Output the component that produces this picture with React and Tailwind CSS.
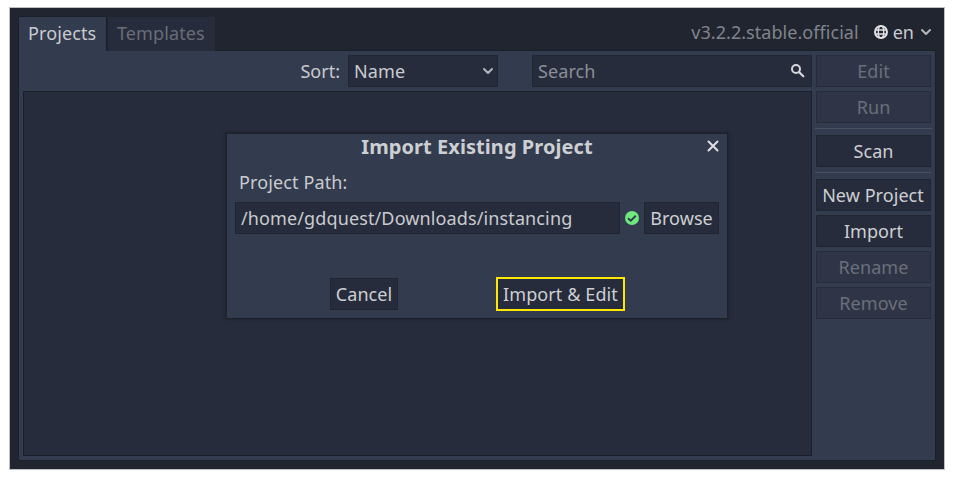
import React from "react";

function Chevron({ className = "" }) {
  return (
    <svg viewBox="0 0 12 8" className={`h-2 w-3 shrink-0 ${className}`} fill="none" stroke="#b4b6bc" strokeWidth="2" strokeLinecap="round" strokeLinejoin="round">
      <path d="M2 2 6 6 10 2" />
    </svg>
  );
}

function Globe() {
  return (
    <svg viewBox="0 0 14 14" className="h-3.5 w-3.5 shrink-0" fill="none" stroke="#e0e0e2">
      <circle cx="7" cy="7" r="6" strokeWidth="2" />
      <ellipse cx="7" cy="7" rx="2.7" ry="6" strokeWidth="1.4" />
      <path d="M1 5h12M1 9h12" strokeWidth="1.4" />
    </svg>
  );
}

function Button({ children, disabled = false, className = "" }) {
  const look = disabled
    ? "border-[#272c3c] bg-[#2f3547] text-[#6b6f7a]"
    : "border-[#202531] bg-[#272c3c] text-[#cdcfd2]";
  return (
    <button className={`flex h-8 shrink-0 items-center justify-center border tracking-[0.06px] ${look} ${className}`}>
      {children}
    </button>
  );
}

function Separator() {
  return <div className="-mx-px mt-[5px] mb-1.5 h-px shrink-0 bg-[#4a5162]" />;
}

function ImportDialog() {
  return (
    <div className="absolute left-[226px] top-[133px] flex h-[186px] w-[502px] flex-col border border-[#1d212c] bg-[#333b4e] px-2 shadow-[0_0_0_1px_#212532,0_0_3px_1px_#202430]">
      <div className="relative flex h-[26px] items-center justify-center text-[20px] font-bold tracking-[0.06px] text-[#cdcfd2]">
        <span>Import Existing Project</span>
        <svg viewBox="0 0 12 12" className="absolute right-0 top-1.5 h-3 w-3" stroke="#e0e0e2" strokeWidth="2" strokeLinecap="round">
          <path d="M1.5 1.5 10.5 10.5M10.5 1.5 1.5 10.5" />
        </svg>
      </div>
      <div className="mt-[9px] h-[33px] pl-1 leading-[26px] tracking-[0.12px]">Project Path:</div>
      <div className="flex items-center">
        <div className="flex h-8 w-[385px] items-center border border-[#202531] bg-[#272c3c] pl-[5px] tracking-[0.12px]">
          /home/gdquest/Downloads/instancing
        </div>
        <svg viewBox="0 0 14 14" className="mx-[5px] h-3.5 w-3.5 shrink-0" fill="none">
          <circle cx="7" cy="7" r="7" fill="#6fe87d" />
          <path d="M3 7.2 5.8 9.7 10.8 4.8" stroke="#2e3d49" strokeWidth="1.9" />
        </svg>
        <Button className="w-[75px]">Browse</Button>
      </div>
      <div className="mt-[43px] flex items-center pl-[95px]">
        <Button className="w-[68px]">Cancel</Button>
        <button className="ml-[98px] flex h-[34px] w-[129px] items-center justify-center border-2 border-[#ffe800] bg-[#272c3c] tracking-[0.1px] text-[#cdcfd2]">
          Import &amp; Edit
        </button>
      </div>
    </div>
  );
}

export default function App() {
  return (
    <div className="relative h-[479px] w-[954px] overflow-hidden whitespace-nowrap bg-white pl-[9px] pt-[7px] font-['Noto_Sans',sans-serif] text-[18px] leading-6 text-[#c9cbcf]">
      <div className="flex h-[463px] w-[936px] flex-col border border-[#bfc0c4] bg-[#212530] px-2 pb-2">
        <header className="flex h-[42px] shrink-0 items-start">
          <div className="relative z-10 mt-2 flex h-[35px] w-[89px] shrink-0 border border-b-0 border-[#1a1f29] bg-[#333b4e] pl-[9px] pt-1 tracking-[0.1px]">
            Projects
          </div>
          <div className="relative z-10 ml-px mt-[9px] flex h-[34px] w-[107px] shrink-0 bg-[#272c3c] pl-[9px] pt-1 tracking-[0.1px] text-[#6a6d78]">
            Templates
          </div>
          <div className="ml-auto mt-3 flex items-center pr-1">
            <span className="mr-[15px] tracking-[0.05px] text-[#81848c]">v3.2.2.stable.official</span>
            <Globe />
            <span className="ml-[5px] mr-1.5">en</span>
            <Chevron />
          </div>
        </header>
        <div className="flex min-h-0 flex-1 gap-1 border border-[#1a1f29] bg-[#333b4e] p-1">
          <main className="flex w-[789px] shrink-0 flex-col gap-1">
            <div className="flex h-8 shrink-0 items-center justify-end">
              <span className="mr-2">Sort:</span>
              <div className="mr-[34px] flex h-8 w-[150px] items-center justify-between border border-[#202531] bg-[#272c3c] pl-[5px] pr-[3px] tracking-[0.1px]">
                <span>Name</span>
                <Chevron />
              </div>
              <div className="flex h-8 w-[280px] items-center justify-between border border-[#202531] bg-[#272c3c] pl-[5px] pr-1.5 tracking-[0.1px] text-[#8b8e97]">
                <span>Search</span>
                <svg viewBox="0 0 14 14" className="h-3.5 w-3.5" fill="none" stroke="#d6d7da" strokeWidth="2" strokeLinecap="round">
                  <circle cx="5" cy="5" r="4" />
                  <path d="M8 8 12.3 12.3" strokeWidth="2.2" />
                </svg>
              </div>
            </div>
            <div className="flex-1 border border-[#1a1f29] bg-[#272c3c]" />
          </main>
          <aside className="flex w-[115px] flex-col">
            <Button disabled className="mb-1">Edit</Button>
            <Button disabled>Run</Button>
            <Separator />
            <Button>Scan</Button>
            <Separator />
            <Button className="mb-1 pr-px">New Project</Button>
            <Button className="mb-1">Import</Button>
            <Button disabled className="mb-1">Rename</Button>
            <Button disabled>Remove</Button>
          </aside>
        </div>
      </div>
      <ImportDialog />
    </div>
  );
}
